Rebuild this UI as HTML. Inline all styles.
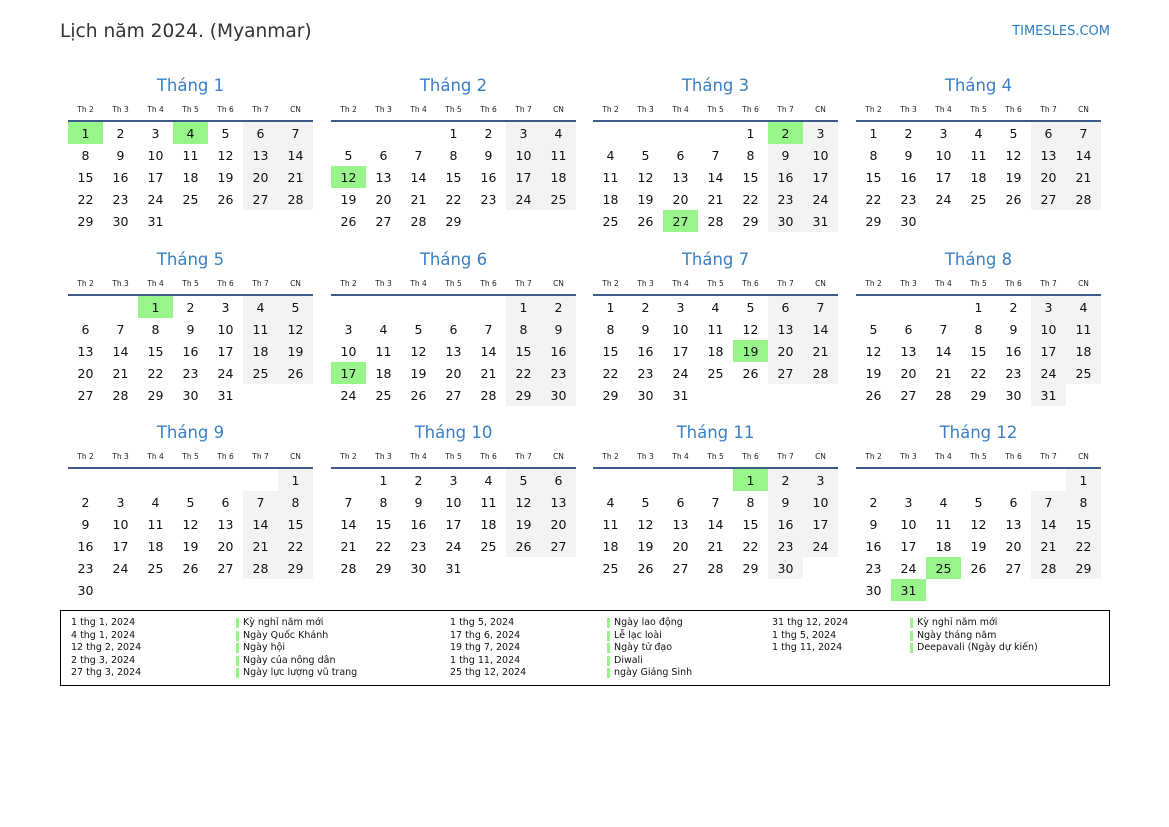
<!DOCTYPE html>
<html><head><meta charset="utf-8">
<style>
body{margin:0;width:1169px;height:827px;background:#fff;font-family:"DejaVu Sans","Liberation Sans",sans-serif;position:relative;overflow:hidden;color:#111}
.t{position:absolute;left:60px;top:21px;font-size:18.6px;color:#333}
.s{position:absolute;right:59px;top:24px;font-size:13px;color:#2a7fc4}
.m{position:absolute;width:245px}
.m h2{margin:0;height:26px;line-height:26px;font-size:16.5px;font-weight:normal;color:#3a7fc4;text-align:center}
table{border-collapse:collapse;table-layout:fixed;width:245px}
th{height:21px;font-size:7.5px;font-weight:normal;color:#222;border-bottom:2px solid #3d5a8a;padding:0;vertical-align:middle}
td{width:35px;height:22px;padding:0;text-align:center;font-size:12.5px}
.w{background:#f3f3f3}
.h{background:#98f58a}
.lg{position:absolute;left:60px;top:610px;width:1048px;height:74px;border:1px solid #000;font-size:9.5px}
.c{position:absolute;top:6px;line-height:12.5px;white-space:nowrap}
.b div{height:12.5px;position:relative;padding-left:7px}
.b div:before{content:"";position:absolute;left:0;top:1px;width:3px;height:10px;background:#98f58a}
</style></head><body>
<div class="t">Lịch năm 2024. (Myanmar)</div>
<div class="s">TIMESLES.COM</div>

<div class="m" style="left:68px;top:73px"><h2>Tháng 1</h2><table><tr><th>Th 2</th><th>Th 3</th><th>Th 4</th><th>Th 5</th><th>Th 6</th><th>Th 7</th><th>CN</th></tr>
<tr><td class="h">1</td><td>2</td><td>3</td><td class="h">4</td><td>5</td><td class="w">6</td><td class="w">7</td></tr>
<tr><td>8</td><td>9</td><td>10</td><td>11</td><td>12</td><td class="w">13</td><td class="w">14</td></tr>
<tr><td>15</td><td>16</td><td>17</td><td>18</td><td>19</td><td class="w">20</td><td class="w">21</td></tr>
<tr><td>22</td><td>23</td><td>24</td><td>25</td><td>26</td><td class="w">27</td><td class="w">28</td></tr>
<tr><td>29</td><td>30</td><td>31</td><td></td><td></td><td></td><td></td></tr></table></div>

<div class="m" style="left:331px;top:73px"><h2>Tháng 2</h2><table><tr><th>Th 2</th><th>Th 3</th><th>Th 4</th><th>Th 5</th><th>Th 6</th><th>Th 7</th><th>CN</th></tr>
<tr><td></td><td></td><td></td><td>1</td><td>2</td><td class="w">3</td><td class="w">4</td></tr>
<tr><td>5</td><td>6</td><td>7</td><td>8</td><td>9</td><td class="w">10</td><td class="w">11</td></tr>
<tr><td class="h">12</td><td>13</td><td>14</td><td>15</td><td>16</td><td class="w">17</td><td class="w">18</td></tr>
<tr><td>19</td><td>20</td><td>21</td><td>22</td><td>23</td><td class="w">24</td><td class="w">25</td></tr>
<tr><td>26</td><td>27</td><td>28</td><td>29</td><td></td><td></td><td></td></tr></table></div>

<div class="m" style="left:593px;top:73px"><h2>Tháng 3</h2><table><tr><th>Th 2</th><th>Th 3</th><th>Th 4</th><th>Th 5</th><th>Th 6</th><th>Th 7</th><th>CN</th></tr>
<tr><td></td><td></td><td></td><td></td><td>1</td><td class="h">2</td><td class="w">3</td></tr>
<tr><td>4</td><td>5</td><td>6</td><td>7</td><td>8</td><td class="w">9</td><td class="w">10</td></tr>
<tr><td>11</td><td>12</td><td>13</td><td>14</td><td>15</td><td class="w">16</td><td class="w">17</td></tr>
<tr><td>18</td><td>19</td><td>20</td><td>21</td><td>22</td><td class="w">23</td><td class="w">24</td></tr>
<tr><td>25</td><td>26</td><td class="h">27</td><td>28</td><td>29</td><td class="w">30</td><td class="w">31</td></tr></table></div>

<div class="m" style="left:856px;top:73px"><h2>Tháng 4</h2><table><tr><th>Th 2</th><th>Th 3</th><th>Th 4</th><th>Th 5</th><th>Th 6</th><th>Th 7</th><th>CN</th></tr>
<tr><td>1</td><td>2</td><td>3</td><td>4</td><td>5</td><td class="w">6</td><td class="w">7</td></tr>
<tr><td>8</td><td>9</td><td>10</td><td>11</td><td>12</td><td class="w">13</td><td class="w">14</td></tr>
<tr><td>15</td><td>16</td><td>17</td><td>18</td><td>19</td><td class="w">20</td><td class="w">21</td></tr>
<tr><td>22</td><td>23</td><td>24</td><td>25</td><td>26</td><td class="w">27</td><td class="w">28</td></tr>
<tr><td>29</td><td>30</td><td></td><td></td><td></td><td></td><td></td></tr></table></div>

<div class="m" style="left:68px;top:247px"><h2>Tháng 5</h2><table><tr><th>Th 2</th><th>Th 3</th><th>Th 4</th><th>Th 5</th><th>Th 6</th><th>Th 7</th><th>CN</th></tr>
<tr><td></td><td></td><td class="h">1</td><td>2</td><td>3</td><td class="w">4</td><td class="w">5</td></tr>
<tr><td>6</td><td>7</td><td>8</td><td>9</td><td>10</td><td class="w">11</td><td class="w">12</td></tr>
<tr><td>13</td><td>14</td><td>15</td><td>16</td><td>17</td><td class="w">18</td><td class="w">19</td></tr>
<tr><td>20</td><td>21</td><td>22</td><td>23</td><td>24</td><td class="w">25</td><td class="w">26</td></tr>
<tr><td>27</td><td>28</td><td>29</td><td>30</td><td>31</td><td></td><td></td></tr></table></div>

<div class="m" style="left:331px;top:247px"><h2>Tháng 6</h2><table><tr><th>Th 2</th><th>Th 3</th><th>Th 4</th><th>Th 5</th><th>Th 6</th><th>Th 7</th><th>CN</th></tr>
<tr><td></td><td></td><td></td><td></td><td></td><td class="w">1</td><td class="w">2</td></tr>
<tr><td>3</td><td>4</td><td>5</td><td>6</td><td>7</td><td class="w">8</td><td class="w">9</td></tr>
<tr><td>10</td><td>11</td><td>12</td><td>13</td><td>14</td><td class="w">15</td><td class="w">16</td></tr>
<tr><td class="h">17</td><td>18</td><td>19</td><td>20</td><td>21</td><td class="w">22</td><td class="w">23</td></tr>
<tr><td>24</td><td>25</td><td>26</td><td>27</td><td>28</td><td class="w">29</td><td class="w">30</td></tr></table></div>

<div class="m" style="left:593px;top:247px"><h2>Tháng 7</h2><table><tr><th>Th 2</th><th>Th 3</th><th>Th 4</th><th>Th 5</th><th>Th 6</th><th>Th 7</th><th>CN</th></tr>
<tr><td>1</td><td>2</td><td>3</td><td>4</td><td>5</td><td class="w">6</td><td class="w">7</td></tr>
<tr><td>8</td><td>9</td><td>10</td><td>11</td><td>12</td><td class="w">13</td><td class="w">14</td></tr>
<tr><td>15</td><td>16</td><td>17</td><td>18</td><td class="h">19</td><td class="w">20</td><td class="w">21</td></tr>
<tr><td>22</td><td>23</td><td>24</td><td>25</td><td>26</td><td class="w">27</td><td class="w">28</td></tr>
<tr><td>29</td><td>30</td><td>31</td><td></td><td></td><td></td><td></td></tr></table></div>

<div class="m" style="left:856px;top:247px"><h2>Tháng 8</h2><table><tr><th>Th 2</th><th>Th 3</th><th>Th 4</th><th>Th 5</th><th>Th 6</th><th>Th 7</th><th>CN</th></tr>
<tr><td></td><td></td><td></td><td>1</td><td>2</td><td class="w">3</td><td class="w">4</td></tr>
<tr><td>5</td><td>6</td><td>7</td><td>8</td><td>9</td><td class="w">10</td><td class="w">11</td></tr>
<tr><td>12</td><td>13</td><td>14</td><td>15</td><td>16</td><td class="w">17</td><td class="w">18</td></tr>
<tr><td>19</td><td>20</td><td>21</td><td>22</td><td>23</td><td class="w">24</td><td class="w">25</td></tr>
<tr><td>26</td><td>27</td><td>28</td><td>29</td><td>30</td><td class="w">31</td><td></td></tr></table></div>

<div class="m" style="left:68px;top:420px"><h2>Tháng 9</h2><table><tr><th>Th 2</th><th>Th 3</th><th>Th 4</th><th>Th 5</th><th>Th 6</th><th>Th 7</th><th>CN</th></tr>
<tr><td></td><td></td><td></td><td></td><td></td><td></td><td class="w">1</td></tr>
<tr><td>2</td><td>3</td><td>4</td><td>5</td><td>6</td><td class="w">7</td><td class="w">8</td></tr>
<tr><td>9</td><td>10</td><td>11</td><td>12</td><td>13</td><td class="w">14</td><td class="w">15</td></tr>
<tr><td>16</td><td>17</td><td>18</td><td>19</td><td>20</td><td class="w">21</td><td class="w">22</td></tr>
<tr><td>23</td><td>24</td><td>25</td><td>26</td><td>27</td><td class="w">28</td><td class="w">29</td></tr>
<tr><td>30</td><td></td><td></td><td></td><td></td><td></td><td></td></tr></table></div>

<div class="m" style="left:331px;top:420px"><h2>Tháng 10</h2><table><tr><th>Th 2</th><th>Th 3</th><th>Th 4</th><th>Th 5</th><th>Th 6</th><th>Th 7</th><th>CN</th></tr>
<tr><td></td><td>1</td><td>2</td><td>3</td><td>4</td><td class="w">5</td><td class="w">6</td></tr>
<tr><td>7</td><td>8</td><td>9</td><td>10</td><td>11</td><td class="w">12</td><td class="w">13</td></tr>
<tr><td>14</td><td>15</td><td>16</td><td>17</td><td>18</td><td class="w">19</td><td class="w">20</td></tr>
<tr><td>21</td><td>22</td><td>23</td><td>24</td><td>25</td><td class="w">26</td><td class="w">27</td></tr>
<tr><td>28</td><td>29</td><td>30</td><td>31</td><td></td><td></td><td></td></tr></table></div>

<div class="m" style="left:593px;top:420px"><h2>Tháng 11</h2><table><tr><th>Th 2</th><th>Th 3</th><th>Th 4</th><th>Th 5</th><th>Th 6</th><th>Th 7</th><th>CN</th></tr>
<tr><td></td><td></td><td></td><td></td><td class="h">1</td><td class="w">2</td><td class="w">3</td></tr>
<tr><td>4</td><td>5</td><td>6</td><td>7</td><td>8</td><td class="w">9</td><td class="w">10</td></tr>
<tr><td>11</td><td>12</td><td>13</td><td>14</td><td>15</td><td class="w">16</td><td class="w">17</td></tr>
<tr><td>18</td><td>19</td><td>20</td><td>21</td><td>22</td><td class="w">23</td><td class="w">24</td></tr>
<tr><td>25</td><td>26</td><td>27</td><td>28</td><td>29</td><td class="w">30</td><td></td></tr></table></div>

<div class="m" style="left:856px;top:420px"><h2>Tháng 12</h2><table><tr><th>Th 2</th><th>Th 3</th><th>Th 4</th><th>Th 5</th><th>Th 6</th><th>Th 7</th><th>CN</th></tr>
<tr><td></td><td></td><td></td><td></td><td></td><td></td><td class="w">1</td></tr>
<tr><td>2</td><td>3</td><td>4</td><td>5</td><td>6</td><td class="w">7</td><td class="w">8</td></tr>
<tr><td>9</td><td>10</td><td>11</td><td>12</td><td>13</td><td class="w">14</td><td class="w">15</td></tr>
<tr><td>16</td><td>17</td><td>18</td><td>19</td><td>20</td><td class="w">21</td><td class="w">22</td></tr>
<tr><td>23</td><td>24</td><td class="h">25</td><td>26</td><td>27</td><td class="w">28</td><td class="w">29</td></tr>
<tr><td>30</td><td class="h">31</td><td></td><td></td><td></td><td></td><td></td></tr></table></div>

<div class="lg">
<div class="c" style="left:10px">1 thg 1, 2024<br>4 thg 1, 2024<br>12 thg 2, 2024<br>2 thg 3, 2024<br>27 thg 3, 2024</div>
<div class="c b" style="left:175px"><div>Kỳ nghỉ năm mới</div><div>Ngày Quốc Khánh</div><div>Ngày hội</div><div>Ngày của nông dân</div><div>Ngày lực lượng vũ trang</div></div>
<div class="c" style="left:389px">1 thg 5, 2024<br>17 thg 6, 2024<br>19 thg 7, 2024<br>1 thg 11, 2024<br>25 thg 12, 2024</div>
<div class="c b" style="left:546px"><div>Ngày lao động</div><div>Lễ lạc loài</div><div>Ngày tử đạo</div><div>Diwali</div><div>ngày Giáng Sinh</div></div>
<div class="c" style="left:711px">31 thg 12, 2024<br>1 thg 5, 2024<br>1 thg 11, 2024</div>
<div class="c b" style="left:849px"><div>Kỳ nghỉ năm mới</div><div>Ngày tháng năm</div><div>Deepavali (Ngày dự kiến)</div></div>
</div>
</body></html>
